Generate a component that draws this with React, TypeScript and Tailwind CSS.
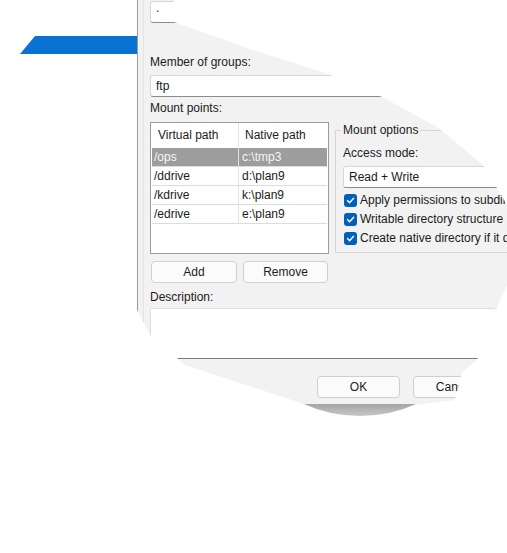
import React from "react";

const inputCls =
  "h-[22px] rounded-[3px] border border-[#d6d6d6] border-b-[#8c8c8c] bg-white px-[5px] leading-[20px]";

const btnCls =
  "flex h-[22px] items-center justify-center rounded-[4px] border border-[#cfcfcf] bg-[#fbfbfb] text-[#1b1b1b]";

const mounts = [
  { v: "/ops", n: "c:\\tmp3", selected: true },
  { v: "/ddrive", n: "d:\\plan9" },
  { v: "/kdrive", n: "k:\\plan9" },
  { v: "/edrive", n: "e:\\plan9" },
];

const options = [
  "Apply permissions to subdirectories",
  "Writable directory structure",
  "Create native directory if it does not exist",
];

function Check() {
  return (
    <span className="flex size-[13px] shrink-0 items-center justify-center rounded-[3px] bg-[#005fb8]">
      <svg width="9" height="9" viewBox="0 0 9 9" fill="none">
        <path d="M1.5 4.6 3.6 6.7 7.6 2.2" stroke="#fff" strokeWidth="1.4" strokeLinecap="round" strokeLinejoin="round" />
      </svg>
    </span>
  );
}

export default function App() {
  return (
    <div className="relative h-[553px] w-[507px] overflow-hidden bg-white font-['Liberation_Sans',Arial,sans-serif] text-[12px] leading-[15px] text-[#1b1b1b]">
      {/* window behind: blue title strip */}
      <div className="absolute left-[20px] top-[36px] h-[18px] w-[117px] bg-[#0a72d2] [clip-path:polygon(15px_0,100%_0,100%_100%,0_100%)]" />

      {/* dialog, seen through the lens */}
      <div className="absolute left-[137px] top-0 h-[420px] w-[370px] border-l border-[#9a9a9a] bg-[#f2f2f2] [clip-path:polygon(0_0,37px_0,37px_22px,113px_49px,191px_74px,245px_97px,300px_127px,346px_165px,360px_188px,370px_205px,370px_285px,361px_305px,351px_330px,340px_360px,325px_372px,318px_400px,278px_405px,170px_405px,48px_365px,40px_358px,13px_335px,0_310px)]">
        <div className="ml-[5px] h-full border-l border-[#e3e3e3] pl-[6px] pt-px">
          <div className={`${inputCls} w-[340px]`}>
            <span className="relative top-[-4px]">.</span>
          </div>

          <div className="mt-[32px]">Member of groups:</div>
          <div className={`${inputCls} mt-[5px] w-[340px]`}>ftp</div>

          <div className="mt-[4px]">Mount points:</div>

          <div className="mt-[6px] flex items-start gap-[6px]">
            <div className="h-[132px] w-[179px] shrink-0 border border-[#9c9c9c] bg-white px-px">
              <div className="flex h-[25px] items-center whitespace-nowrap">
                <div className="flex h-full w-[87px] shrink-0 items-center border-r border-[#e2e2e2] pl-[6px]">Virtual path</div>
                <div className="pl-[6px]">Native path</div>
              </div>
              {mounts.map((m) => (
                <div
                  key={m.v}
                  className={`flex h-[19px] items-center whitespace-nowrap border-b border-[#dcdcdc] ${
                    m.selected ? "bg-[#9d9d9d] text-[#f5f5f5]" : ""
                  }`}
                >
                  <div className="flex h-full w-[87px] shrink-0 items-center border-r border-[#e2e2e2] pl-[2px]">{m.v}</div>
                  <div className="pl-[3px]">{m.n}</div>
                </div>
              ))}
            </div>

            <fieldset className="mt-px w-[230px] shrink-0 border border-[#d6d6d6] pb-[4px] pl-[7px]">
              <legend className="-ml-[2px] px-[2px]">Mount options</legend>
              <div className="mt-[8px]">Access mode:</div>
              <div className={`${inputCls} mt-[5px] w-[220px]`}>Read + Write</div>
              <div className="mt-[3px] flex flex-col">
                {options.map((o) => (
                  <div key={o} className="flex h-[19px] items-center gap-[3px] whitespace-nowrap pl-px">
                    <Check />
                    <span>{o}</span>
                  </div>
                ))}
              </div>
            </fieldset>
          </div>

          <div className="ml-px mt-[7px] flex gap-[6px]">
            <div className={`${btnCls} w-[86px]`}>Add</div>
            <div className={`${btnCls} w-[85px]`}>Remove</div>
          </div>

          <div className="mt-[7px]">Description:</div>
          <div className="mt-[3px] h-[51px] w-[345px] border-b border-l border-t border-[#dedede] border-b-[#7a7a7a] bg-white" />

          <div className="ml-[167px] mt-[17px] flex gap-[13px]">
            <div className={`${btnCls} w-[83px] shrink-0`}>OK</div>
            <div className={`${btnCls} w-[83px] shrink-0`}>Cancel</div>
          </div>
        </div>
      </div>

      {/* shadow under the lens */}
      <svg className="absolute left-[300px] top-[404px]" width="120" height="14" viewBox="0 0 120 14">
        <defs>
          <linearGradient id="sh" x1="0" y1="0" x2="0" y2="1">
            <stop offset="0" stopColor="#a4a4a4" />
            <stop offset="1" stopColor="#c8c8c8" />
          </linearGradient>
        </defs>
        <path d="M4 0 H116 Q90 12 60 12 Q30 12 4 0 Z" fill="url(#sh)" />
      </svg>
    </div>
  );
}
